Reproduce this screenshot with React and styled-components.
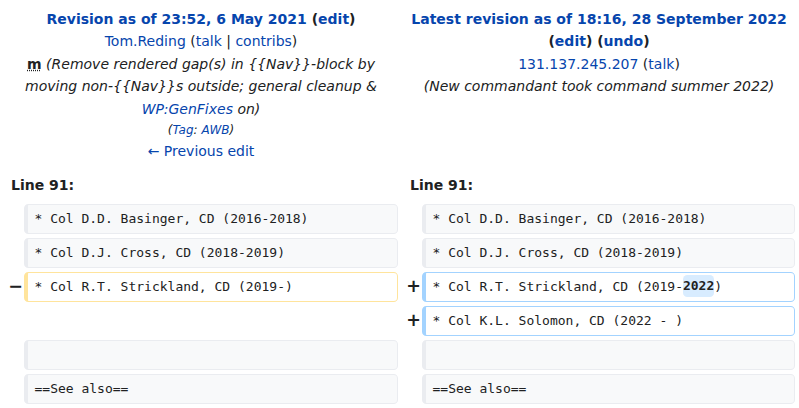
import React from "react";
import styled, { createGlobalStyle } from "styled-components";

const Global = createGlobalStyle`
  html, body { margin: 0; padding: 0; background: #ffffff; }
  body {
    font-family: "DejaVu Sans", sans-serif;
    font-size: 14px;
    color: #202122;
  }
`;

const DiffGrid = styled.div`
  display: grid;
  grid-template-columns: 23px 374px 22px 373px;
  column-gap: 1px;
  row-gap: 4px;
  padding: 8px 4px 0 0;
  width: 799px;
  box-sizing: border-box;
`;

const HeaderCell = styled.div`
  grid-column: span 2;
  text-align: center;
  line-height: 1.6;
  padding-left: 4px;
`;

const Line = styled.div``;

const TagLine = styled.div`
  font-size: 12px;
  line-height: 19.2px;
  padding-top: 0.8px;
  font-style: italic;
`;

const Link = styled.a`
  color: #0645ad;
  text-decoration: none;
  font-weight: ${(p) => (p.$bold ? "bold" : "inherit")};
`;

const Strong = styled.strong`
  font-weight: bold;
`;

const Minor = styled.abbr`
  font-weight: bold;
  text-decoration: underline dotted;
  text-underline-offset: 1px;
`;

const Comment = styled.span`
  font-style: italic;
`;

const LineNo = styled.div`
  grid-column: span 2;
  font-weight: bold;
  line-height: 1.6;
  padding: 7.6px 0 3.6px 11px;
`;

const Marker = styled.div`
  display: flex;
  align-items: center;
  justify-content: flex-end;
  font-size: 17.5px;
  font-weight: bold;
  line-height: 1.2;
  color: #202122;
`;

const borderColors = {
  context: "#eaecf0",
  deleted: "#ffe49c",
  added: "#a3d3ff",
};

const Content = styled.div`
  box-sizing: border-box;
  height: 30px;
  font-family: "DejaVu Sans Mono", monospace;
  font-size: 13px;
  line-height: 1.6;
  white-space: pre-wrap;
  padding: 3.6px 6.5px;
  border-style: solid;
  border-width: 1px 1px 1px 4px;
  border-radius: 0.33em;
  border-color: ${(p) => borderColors[p.$kind]};
  background: ${(p) => (p.$kind === "context" ? "#f8f9fa" : "#ffffff")};
  color: #202122;
`;

const Empty = styled.div``;

const Change = styled.ins`
  text-decoration: none;
  font-weight: bold;
  background: #d8ecff;
  border-radius: 0.33em;
  padding: 0.25em 0;
`;

function ContextRow({ text }) {
  return (
    <>
      <Marker />
      <Content $kind="context">{text}</Content>
      <Marker />
      <Content $kind="context">{text}</Content>
    </>
  );
}

export default function App() {
  return (
    <>
      <Global />
      <DiffGrid>
        <HeaderCell>
          <Line>
            <Strong>
              <Link $bold>Revision as of 23:52, 6 May 2021</Link> (<Link $bold>edit</Link>)
            </Strong>
          </Line>
          <Line>
            <Link>Tom.Reding</Link> (<Link>talk</Link> | <Link>contribs</Link>)
          </Line>
          <Line>
            <Minor title="This is a minor edit">m</Minor>{" "}
            <Comment>
              (Remove rendered gap(s) in {"{{Nav}}"}-block by moving non-{"{{Nav}}"}s outside; general
              cleanup &amp; <Link>WP:GenFixes</Link> on)
            </Comment>
          </Line>
          <TagLine>
            (<Link>Tag</Link>: <Link>AWB</Link>)
          </TagLine>
          <Line>
            <Link>← Previous edit</Link>
          </Line>
        </HeaderCell>
        <HeaderCell>
          <Line>
            <Strong>
              <Link $bold>Latest revision as of 18:16, 28 September 2022</Link> (
              <Link $bold>edit</Link>) (<Link $bold>undo</Link>)
            </Strong>
          </Line>
          <Line>
            <Link>131.137.245.207</Link> (<Link>talk</Link>)
          </Line>
          <Line>
            <Comment>(New commandant took command summer 2022)</Comment>
          </Line>
        </HeaderCell>

        <LineNo>Line 91:</LineNo>
        <LineNo>Line 91:</LineNo>

        <ContextRow text="* Col D.D. Basinger, CD (2016-2018)" />
        <ContextRow text="* Col D.J. Cross, CD (2018-2019)" />

        <Marker>−</Marker>
        <Content $kind="deleted">* Col R.T. Strickland, CD (2019-)</Content>
        <Marker>+</Marker>
        <Content $kind="added">
          * Col R.T. Strickland, CD (2019-<Change>2022</Change>)
        </Content>

        <Empty />
        <Empty />
        <Marker>+</Marker>
        <Content $kind="added">* Col K.L. Solomon, CD (2022 - )</Content>

        <ContextRow text="" />
        <ContextRow text="==See also==" />
      </DiffGrid>
    </>
  );
}
